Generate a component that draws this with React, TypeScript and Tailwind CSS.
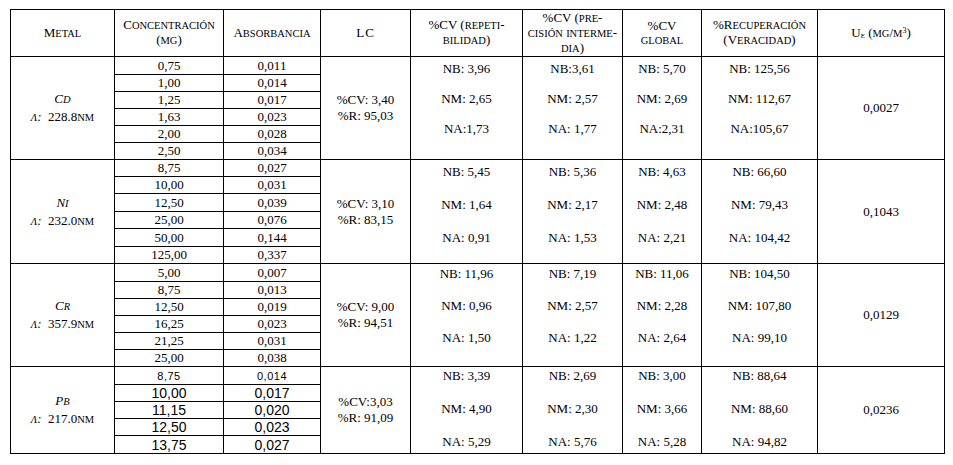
import React from 'react';

type Group = {
  metal: string;
  lambda: string;
  conc: string[];
  abs: string[];
  heights: string[];
  lc: string[];
  rep: string[];
  pre: string[];
  glob: string[];
  rec: string[];
  ue: string;
  stack: string;
  sans?: boolean;
};

const groups: Group[] = [
  {
    metal: 'Cd',
    lambda: '228.8',
    conc: ['0,75', '1,00', '1,25', '1,63', '2,00', '2,50'],
    abs: ['0,011', '0,014', '0,017', '0,023', '0,028', '0,034'],
    heights: ['h-[18px]', 'h-[17px]', 'h-[17px]', 'h-[17px]', 'h-[17px]', 'h-[17px]'],
    lc: ['%CV: 3,40', '%R: 95,03'],
    rep: ['NB: 3,96', 'NM: 2,65', 'NA:1,73'],
    pre: ['NB:3,61', 'NM: 2,57', 'NA: 1,77'],
    glob: ['NB: 5,70', 'NM: 2,69', 'NA:2,31'],
    rec: ['NB: 125,56', 'NM: 112,67', 'NA:105,67'],
    ue: '0,0027',
    stack: 'pt-[4px] gap-[14px]',
  },
  {
    metal: 'Ni',
    lambda: '232.0',
    conc: ['8,75', '10,00', '12,50', '25,00', '50,00', '125,00'],
    abs: ['0,027', '0,031', '0,039', '0,076', '0,144', '0,337'],
    heights: ['h-[17px]', 'h-[17px]', 'h-[18px]', 'h-[17px]', 'h-[18px]', 'h-[17px]'],
    lc: ['%CV: 3,10', '%R: 83,15'],
    rep: ['NB: 5,45', 'NM: 1,64', 'NA: 0,91'],
    pre: ['NB: 5,36', 'NM: 2,17', 'NA: 1,53'],
    glob: ['NB: 4,63', 'NM: 2,48', 'NA: 2,21'],
    rec: ['NB: 66,60', 'NM: 79,43', 'NA: 104,42'],
    ue: '0,1043',
    stack: 'pt-[4px] gap-[17px]',
  },
  {
    metal: 'Cr',
    lambda: '357.9',
    conc: ['5,00', '8,75', '12,50', '16,25', '21,25', '25,00'],
    abs: ['0,007', '0,013', '0,019', '0,023', '0,031', '0,038'],
    heights: ['h-[18px]', 'h-[17px]', 'h-[17px]', 'h-[17px]', 'h-[17px]', 'h-[17px]'],
    lc: ['%CV: 9,00', '%R: 94,51'],
    rep: ['NB: 11,96', 'NM: 0,96', 'NA: 1,50'],
    pre: ['NB: 7,19', 'NM: 2,57', 'NA: 1,22'],
    glob: ['NB: 11,06', 'NM: 2,28', 'NA: 2,64'],
    rec: ['NB: 104,50', 'NM: 107,80', 'NA: 99,10'],
    ue: '0,0129',
    stack: 'pt-[2px] gap-[16px]',
  },
  {
    metal: 'Pb',
    lambda: '217.0',
    conc: ['8,75', '10,00', '11,15', '12,50', '13,75'],
    abs: ['0,014', '0,017', '0,020', '0,023', '0,027'],
    heights: ['h-[18px]', 'h-[16px]', 'h-[17px]', 'h-[17px]', 'h-[18px]'],
    lc: ['%CV:3,03', '%R: 91,09'],
    rep: ['NB: 3,39', 'NM: 4,90', 'NA: 5,29'],
    pre: ['NB: 2,69', 'NM: 2,30', 'NA: 5,76'],
    glob: ['NB: 3,00', 'NM: 3,66', 'NA: 5,28'],
    rec: ['NB: 88,64', 'NM: 88,60', 'NA: 94,82'],
    ue: '0,0236',
    stack: 'pt-[1px] gap-[17px]',
    sans: true,
  },
];

// word-style small caps: lowercase runs become smaller capitals
function Sc({ text }: { text: string }) {
  const parts = text.split(/([a-záéíóúñλ]+)/);
  return (
    <>
      {parts.map((p, i) =>
        /^[a-záéíóúñλ]+$/.test(p) ? (
          <span key={i} className="text-[10.5px]">
            {p.toUpperCase()}
          </span>
        ) : (
          <span key={i}>{p}</span>
        )
      )}
    </>
  );
}

function Stack({ lines, stack }: { lines: string[]; stack: string }) {
  return (
    <div className={`flex flex-col items-center leading-[16px] ${stack}`}>
      {lines.map((l) => (
        <span key={l}>{l}</span>
      ))}
    </div>
  );
}

const cell = 'border border-black p-0 text-center';
const head = 'border border-black p-0 text-center align-middle font-normal leading-[14px]';

export default function App() {
  return (
    <div className="h-[465px] w-[953px] bg-white pt-[9px] pl-[10px] font-['Liberation_Serif','Times_New_Roman',serif] text-[13px] text-black">
      <table className="w-[934px] table-fixed border-collapse">
        <colgroup>
          <col className="w-[104px]" />
          <col className="w-[109px]" />
          <col className="w-[97px]" />
          <col className="w-[90px]" />
          <col className="w-[112px]" />
          <col className="w-[100px]" />
          <col className="w-[79px]" />
          <col className="w-[116px]" />
          <col className="w-[127px]" />
        </colgroup>
        <thead>
          <tr className="h-[47px]">
            <th className={head}>
              <Sc text="Metal" />
            </th>
            <th className={head}>
              <Sc text="Concentración" />
              <br />
              <Sc text="(mg)" />
            </th>
            <th className={head}>
              <Sc text="Absorbancia" />
            </th>
            <th className={head}>
              <span className="tracking-[1px]">LC</span>
            </th>
            <th className={head}>
              <Sc text="%CV (repeti-" />
              <br />
              <Sc text="bilidad)" />
            </th>
            <th className={head}>
              <Sc text="%CV (pre-" />
              <br />
              <Sc text="cisión interme-" />
              <br />
              <Sc text="dia)" />
            </th>
            <th className={head}>
              <Sc text="%CV" />
              <br />
              <Sc text="global" />
            </th>
            <th className={head}>
              <Sc text="%Recuperación" />
              <br />
              <Sc text="(Veracidad)" />
            </th>
            <th className={head}>
              U<sub className="text-[7px]">E</sub> <Sc text="(mg/m" />
              <sup className="text-[8px]">3</sup>)
            </th>
          </tr>
        </thead>
        <tbody>
          {groups.map((g) =>
            g.conc.map((c, i) => (
              <tr key={g.metal + i} className={g.heights[i]}>
                {i === 0 && (
                  <td rowSpan={g.conc.length} className={`${cell} align-middle leading-[17px]`}>
                    <div className="italic">
                      <Sc text={g.metal.charAt(0) + g.metal.slice(1).toLowerCase()} />
                    </div>
                    <div>
                      <span className="italic">
                        <Sc text="λ:" />
                      </span>
                      {'\u00a0\u00a0'}
                      {g.lambda}
                      <Sc text="nm" />
                    </div>
                  </td>
                )}
                <td
                  className={`${cell} align-bottom leading-[16px] ${
                    g.sans
                      ? i === 0
                        ? "font-['Liberation_Sans',Arial,sans-serif] text-[11px] tracking-[0.5px]"
                        : "font-['Liberation_Sans',Arial,sans-serif] text-[14px]"
                      : ''
                  }`}
                >
                  {c}
                </td>
                <td
                  className={`${cell} align-bottom leading-[16px] ${
                    g.sans
                      ? i === 0
                        ? "font-['Liberation_Sans',Arial,sans-serif] text-[11px] tracking-[0.5px]"
                        : "font-['Liberation_Sans',Arial,sans-serif] text-[14px]"
                      : ''
                  }`}
                >
                  {g.abs[i]}
                </td>
                {i === 0 && (
                  <>
                    <td rowSpan={g.conc.length} className={`${cell} align-middle leading-[16px]`}>
                      <div>{g.lc[0]}</div>
                      <div>{g.lc[1]}</div>
                    </td>
                    <td rowSpan={g.conc.length} className={`${cell} align-top`}>
                      <Stack lines={g.rep} stack={g.stack} />
                    </td>
                    <td rowSpan={g.conc.length} className={`${cell} align-top`}>
                      <Stack lines={g.pre} stack={g.stack} />
                    </td>
                    <td rowSpan={g.conc.length} className={`${cell} align-top`}>
                      <Stack lines={g.glob} stack={g.stack} />
                    </td>
                    <td rowSpan={g.conc.length} className={`${cell} align-top`}>
                      <Stack lines={g.rec} stack={g.stack} />
                    </td>
                    <td rowSpan={g.conc.length} className={`${cell} align-middle`}>
                      {g.ue}
                    </td>
                  </>
                )}
              </tr>
            ))
          )}
        </tbody>
      </table>
    </div>
  );
}
